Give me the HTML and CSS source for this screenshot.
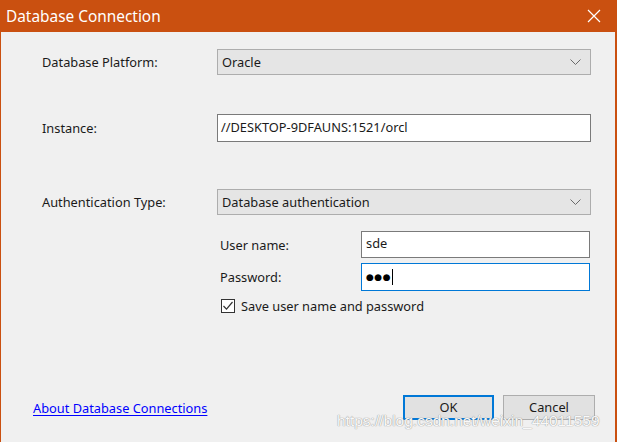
FILE: index.html
```html
<!DOCTYPE html>
<html>
<head>
<meta charset="utf-8">
<link rel="stylesheet" href="styles.css">
</head>
<body>
<div class="window">
  <div class="titlebar">
    <span class="title">Database Connection</span>
    <svg class="close" width="14" height="14" viewBox="0 0 14 14"><path d="M1 1 L13 13 M13 1 L1 13" stroke="#fff" stroke-width="1.2" fill="none"/></svg>
  </div>
  <div class="content">
    <div class="row row-platform">
      <span class="label">Database Platform:</span>
      <div class="combo">
        <span>Oracle</span>
        <svg class="chev" width="11" height="6" viewBox="0 0 11 6"><path d="M0.5 0.5 L5.5 5.5 L10.5 0.5" stroke="#6a6a6a" stroke-width="1" fill="none"/></svg>
      </div>
    </div>
    <div class="row row-instance">
      <span class="label">Instance:</span>
      <div class="textbox">//DESKTOP-9DFAUNS:1521/orcl</div>
    </div>
    <div class="row row-auth">
      <span class="label">Authentication Type:</span>
      <div class="combo">
        <span>Database authentication</span>
        <svg class="chev" width="11" height="6" viewBox="0 0 11 6"><path d="M0.5 0.5 L5.5 5.5 L10.5 0.5" stroke="#6a6a6a" stroke-width="1" fill="none"/></svg>
      </div>
    </div>
    <div class="creds">
      <span class="sublabel">User name:</span>
      <div class="textbox small">sde</div>
      <span class="sublabel">Password:</span>
      <div class="textbox small focus"><span class="dots">●●●</span><span class="caret"></span></div>
      <label class="check">
        <svg class="box" width="14" height="14" viewBox="0 0 14 14"><rect x="0.5" y="0.5" width="13" height="13" fill="#fff" stroke="#333"/><path d="M2.5 7 L5.5 10.2 L11.5 3" stroke="#333" stroke-width="1.2" fill="none"/></svg>
        <span>Save user name and password</span>
      </label>
    </div>
    <div class="footer">
      <a class="link" href="#">About Database Connections</a>
      <div class="buttons">
        <div class="btn default">OK</div>
        <div class="btn">Cancel</div>
      </div>
    </div>
  </div>
  <div class="watermark">https://blog.csdn.net/weixin_44011559</div>
</div>
</body>
</html>
```
FILE: styles.css
```css
html, body {
  margin: 0;
  padding: 0;
  background: #f0f0f0;
}
.window {
  position: relative;
  width: 617px;
  height: 442px;
  box-sizing: border-box;
  border-left: 1px solid #ca5010;
  border-right: 2px solid #ca5010;
  background: #f0f0f0;
  display: flex;
  flex-direction: column;
  font-family: "Noto Sans", "Open Sans", sans-serif;
  font-size: 12.8px;
  color: #1a1a1a;
  overflow: hidden;
}
.titlebar {
  height: 32px;
  background: #ca5010;
  display: flex;
  align-items: center;
  justify-content: space-between;
  padding: 0 14px 0 5px;
  flex: none;
}
.title {
  color: #fff;
  font-size: 15.4px;
}
.close {
  display: block;
}
.content {
  flex: 1;
  display: flex;
  flex-direction: column;
  padding-top: 17px;
}
.row {
  display: grid;
  grid-template-columns: 175px 374px;
  align-items: center;
  padding-left: 41px;
}
.combo {
  height: 26px;
  box-sizing: border-box;
  border: 1px solid #adadad;
  background: #e5e5e5;
  display: flex;
  align-items: center;
  justify-content: space-between;
  padding: 0 9px 0 4px;
}
.chev {
  display: block;
}
.textbox {
  height: 28px;
  box-sizing: border-box;
  border: 1px solid #7a7a7a;
  background: #fff;
  display: flex;
  align-items: center;
  padding: 0 3px 2px;
}
.row-instance {
  margin-top: 39px;
}
.row-auth {
  margin-top: 47px;
}
.creds {
  display: grid;
  grid-template-columns: 141px 229px;
  row-gap: 5px;
  align-items: center;
  margin-left: 219px;
  margin-top: 16px;
}
.textbox.small {
  height: 27px;
  padding: 0 4px 3px;
}
.textbox.focus {
  height: 28px;
  border-color: #0078d7;
  padding-bottom: 0;
}
.dots {
  font-family: "DejaVu Sans", sans-serif;
  font-size: 9px;
  letter-spacing: 0.5px;
  color: #000;
}
.caret {
  display: inline-block;
  width: 1px;
  height: 16px;
  background: #000;
  margin-left: 1px;
}
.check {
  grid-column: 1 / 3;
  display: flex;
  align-items: center;
  gap: 6px;
  margin-left: 1px;
  margin-top: 1px;
}
.box {
  display: block;
}
.footer {
  margin-top: auto;
  display: flex;
  align-items: center;
  justify-content: space-between;
  padding: 0 20px 22px 32px;
}
.link {
  color: #0000ff;
  text-decoration: underline;
  text-underline-offset: 2px;
}
.buttons {
  display: flex;
  gap: 9px;
}
.btn {
  width: 92px;
  height: 25px;
  box-sizing: border-box;
  border: 1px solid #adadad;
  background: #e1e1e1;
  display: flex;
  align-items: center;
  justify-content: center;
  padding-bottom: 1px;
}
.btn.default {
  width: 91px;
  border: 2px solid #0078d7;
}
.watermark {
  position: absolute;
  left: 336px;
  top: 412px;
  font-family: "Liberation Sans", Arial, sans-serif;
  font-size: 15.5px;
  color: rgba(255, 255, 255, 0.95);
  text-shadow: 0 0 1px #9a9a9a, 0 0 1px #9a9a9a;
  white-space: nowrap;
}
```
